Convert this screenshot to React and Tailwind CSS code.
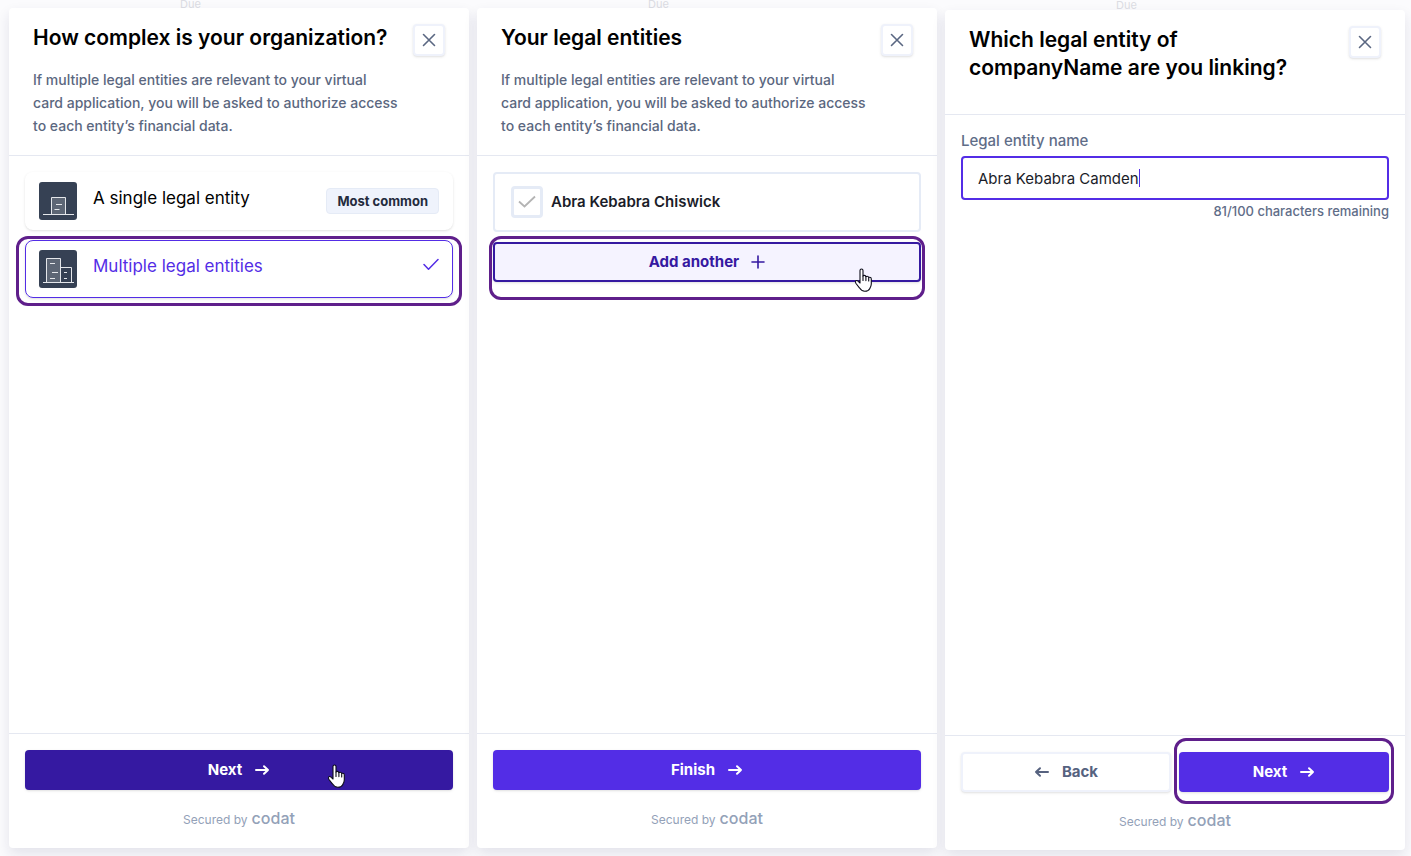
import React from "react";

const outline = "pointer-events-none absolute border-3 border-[#5f1f8b] rounded-xl";

function Arrow({ back }) {
  return (
    <svg width="16" height="16" viewBox="0 0 16 16" fill="none" stroke="currentColor" strokeWidth="2" strokeLinecap="round" strokeLinejoin="round" className={back ? "rotate-180" : ""} aria-hidden="true">
      <path d="M2 8h12M10 4.200 14 8l-4 3.800" />
    </svg>
  );
}

function Hand({ className }) {
  return (
    <svg width="20" height="26" viewBox="0 0 20 26" className={"pointer-events-none absolute " + className} aria-hidden="true">
      <path
        d="M6 2.6C6 1.4 6.7 1 7.5 1S9 1.5 9 2.6V8c.3-.5.8-.6 1.300-.6.9 0 1.500.5 1.600 1.200.3-.3.700-.4 1.200-.4.9 0 1.500.6 1.600 1.300.3-.2.600-.3 1-.3 1 0 1.600.7 1.600 1.700V16c0 2-.9 3.500-1.600 4.700-.8 1.600-2.200 2.500-4.900 2.500-3 0-4.200-1.400-5.400-3.400L2 15.500c-.7-1.200-.9-2.100-.2-2.700.8-.6 1.900-.1 2.700.8L6 15z"
        fill="white"
        stroke="#0b0b18"
        strokeWidth="1.1"
        strokeLinejoin="round"
      />
      <path d="M9 8v4.500M11.900 8.600v4M14.700 9.700v3.300" stroke="#0b0b18" strokeWidth="1.1" strokeLinecap="round" />
    </svg>
  );
}

function Building({ multiple }) {
  return (
    <svg width="38" height="38" viewBox="0 0 38 38" fill="none" stroke="#e5e7eb" className="shrink-0" aria-hidden="true">
      <rect width="38" height="38" rx="3" fill="#364154" stroke="none" />
      {multiple ? (
        <>
          <path d="M7.500 32V8.500h14V32" fill="#5d6675" />
          <path d="M21.500 17.500h11V32" />
          <path d="M11 13.500h5M13 22.500h6M11 28.500h5M25 22.500h3M25 28.500h3" />
        </>
      ) : (
        <>
          <path d="M12.500 32V15.500h14V32" fill="#5d6675" />
          <path d="M17 22.500h6M15.500 27.500h5" />
        </>
      )}
      <path d="M4 32.500h31" />
    </svg>
  );
}

function Header({ title, children, className }) {
  return (
    <header className={"flex items-start justify-between border-b border-[#e5e8f1] px-6 pt-4 " + className}>
      <div>
        <h2 className="text-[21px] leading-7 font-semibold text-black">{title}</h2>
        {children}
      </div>
      <button type="button" aria-label="Close" className="-ml-2 flex size-8 shrink-0 items-center justify-center rounded-sm border-2 border-[#eff2fb] bg-white text-[#5a6782] shadow-sm">
        <svg width="14" height="14" viewBox="0 0 14 14" stroke="currentColor" strokeWidth="1.600" strokeLinecap="round" aria-hidden="true">
          <path d="M1.500 1.500l11 11M12.500 1.500l-11 11" />
        </svg>
      </button>
    </header>
  );
}

function Intro() {
  return (
    <p className="mt-4 text-sm leading-[23px] font-medium text-[#5b6780]">
      If multiple legal entities are relevant to your virtual
      <br />
      card application, you will be asked to authorize access
      <br />
      to each entity’s financial data.
    </p>
  );
}

function Footer({ children }) {
  return (
    <footer className="border-t border-[#e5e8f1] px-4 py-4">
      {children}
      <p className="mt-4 flex items-baseline justify-center gap-1 text-xs leading-6 text-[#93a1b8]">
        Secured by <span className="text-base leading-6 font-medium">codat</span>
      </p>
    </footer>
  );
}

function Panel({ children, due, className }) {
  return (
    <section className={"relative flex min-w-0 flex-1 flex-col " + className}>
      <span className={"absolute left-[171px] text-[11px] text-[#dcdde3] " + due}>Due</span>
      <div className="relative flex flex-1 flex-col rounded-sm bg-white shadow-[0_6px_14px_rgba(30,30,80,0.11)]">{children}</div>
    </section>
  );
}

const primary = "relative flex h-10 w-full items-center justify-center gap-3 rounded-sm text-[15px] font-bold text-white shadow-sm ";

export default function App() {
  return (
    <main className="flex min-h-screen gap-2 bg-[#fbfbfd] pt-2 pr-1.5 pb-1.5 pl-[9px] font-['Inter',sans-serif]">
      <Panel className="mb-0.5" due="-top-2 leading-[8px]">
        <Header title="How complex is your organization?" className="pb-[18px]">
          <Intro />
        </Header>
        <div className="flex flex-1 flex-col gap-2.5 px-4 pt-4">
          <button type="button" className="flex h-[58px] items-center gap-4 rounded-lg px-3.5 text-[17px] text-black shadow-sm">
            <Building />
            <span className="flex-1 pb-1 text-left">A single legal entity</span>
            <span className="rounded-sm border border-[#e5ebf6] bg-[#eff3fc] px-2.5 py-1 text-[13px] leading-4 font-bold text-[#242b3d]">Most common</span>
          </button>
          <div className="relative">
            <button type="button" aria-pressed="true" className="flex h-[58px] w-full items-center gap-4 rounded-lg border border-[#532de6] px-[13px] text-[17px] text-[#532de6] shadow-sm">
              <Building multiple />
              <span className="flex-1 pb-1 text-left">Multiple legal entities</span>
              <span className="pb-2">
                <svg width="16" height="14" viewBox="0 0 16 14" fill="none" stroke="currentColor" strokeWidth="1.500" strokeLinecap="round" strokeLinejoin="round" aria-hidden="true">
                  <path d="M1 6.500l4.500 4.700L15 1.500" />
                </svg>
              </span>
            </button>
            <span className={outline + " -inset-x-[9px] -top-1 -bottom-2"} />
          </div>
        </div>
        <Footer>
          <button type="button" className={primary + "bg-[#3519a1]"}>
            Next <Arrow />
            <Hand className="right-[106px] top-3.5" />
          </button>
        </Footer>
      </Panel>

      <Panel className="mb-0.5" due="-top-2 leading-[8px]">
        <Header title="Your legal entities" className="pb-[18px]">
          <Intro />
        </Header>
        <div className="flex flex-1 flex-col gap-2.5 px-4 pt-4">
          <label className="relative flex h-[60px] items-center gap-2 rounded-sm border-2 border-[#e5ebf6] px-4 text-[15px] font-semibold text-[#1b1d29]">
            <input type="checkbox" defaultChecked className="size-8 appearance-none rounded-sm border-3 border-[#e5ebf6] bg-white" />
            <svg width="18" height="14" viewBox="0 0 18 14" fill="none" stroke="#b4b4b4" strokeWidth="1.800" className="pointer-events-none absolute left-[23px]" aria-hidden="true">
              <path d="M1 6.500l5.500 5L17 1.500" />
            </svg>
            Abra Kebabra Chiswick
          </label>
          <div className="relative">
            <button type="button" className="relative flex h-10 w-full items-center justify-center gap-3 rounded-sm border-2 border-[#3519a1] bg-[#f5f3ff] text-[15px] font-bold text-[#3519a1] shadow-sm">
              Add another
              <svg width="14" height="14" viewBox="0 0 14 14" stroke="currentColor" strokeWidth="1.600" strokeLinecap="round" aria-hidden="true">
                <path d="M7 1v12M1 7h12" />
              </svg>
            </button>
            <span className={outline + " -inset-x-1 -top-1.5 -bottom-[18px]"} />
            <Hand className="right-[47px] top-[26px]" />
          </div>
        </div>
        <Footer>
          <button type="button" className={primary + "bg-[#532de6]"}>
            Finish <Arrow />
          </button>
        </Footer>
      </Panel>

      <Panel className="mt-0.5" due="-top-2.5 leading-[10px]">
        <Header title={<>Which legal entity of<br />companyName are you linking?</>} className="pb-8" />
        <div className="flex flex-1 flex-col px-4 pt-4">
          <label htmlFor="entity" className="text-[15px] leading-5 font-medium text-[#5f6d88]">Legal entity name</label>
          <div className="relative mt-[5px]">
            <input id="entity" defaultValue="Abra Kebabra Camden" className="h-11 w-full rounded-sm border-2 border-[#532de6] px-[15px] text-[15px] text-[#1b1d29] outline-none" />
            <span className="pointer-events-none absolute inset-y-0 left-[17px] flex items-center text-[15px]" aria-hidden="true">
              <span className="invisible">Abra Kebabra Camden</span>
              <span className="h-[18px] w-px bg-[#532de6]" />
            </span>
          </div>
          <p className="text-right text-[13px] leading-[22px] font-medium text-[#5f6d88]">81/100 characters remaining</p>
        </div>
        <Footer>
          <div className="grid grid-cols-2 gap-2">
            <button type="button" className="flex h-10 items-center justify-center gap-3 rounded-sm border-2 border-[#eff2fb] bg-white text-[15px] font-bold text-[#56627f] shadow-sm">
              <Arrow back /> Back
            </button>
            <div className="relative">
              <button type="button" className={primary + "bg-[#532de6]"}>
                Next <Arrow />
              </button>
              <span className={outline + " -inset-x-[5px] -top-3.5 -bottom-3"} />
            </div>
          </div>
        </Footer>
      </Panel>
    </main>
  );
}
